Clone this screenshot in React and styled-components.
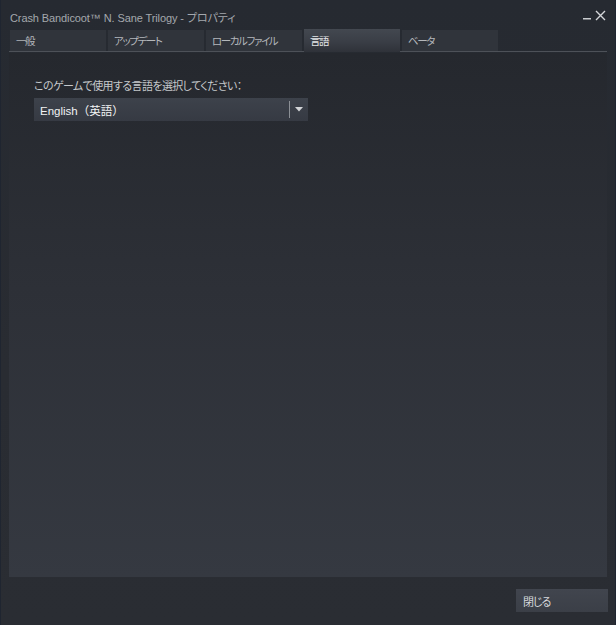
import React from "react";
import styled, { createGlobalStyle } from "styled-components";

const Global = createGlobalStyle`
  html, body { margin: 0; padding: 0; background: #1f232a; }
  body { font-family: "Liberation Sans", "Noto Sans CJK JP", sans-serif; }
  * { box-sizing: border-box; }
`;

const Window = styled.div`
  width: 616px;
  height: 625px;
  display: flex;
  flex-direction: column;
  background: linear-gradient(180deg, #262a31 0%, #292c32 60%, #2a2d33 100%);
  border-left: 1px solid #1f2530;
  border-right: 1px solid #1f2530;
  padding: 0 8px 0 8px;
`;

const TitleBar = styled.div`
  height: 29px;
  display: flex;
  align-items: center;
  justify-content: space-between;
  padding-left: 1px;
  padding-top: 4px;
`;

const Title = styled.div`
  font-size: 11px;
  color: #a4a8ad;
  font-feature-settings: "palt";
  letter-spacing: -0.1px;
`;

const Controls = styled.div`
  display: flex;
  align-items: flex-end;
  gap: 3px;
  margin-right: 1px;
  margin-top: -4px;
`;

const TabRow = styled.div`
  display: flex;
  gap: 2px;
  height: 23px;
  border-bottom: 1px solid #4d5158;
  padding-left: 1px;
`;

const Tab = styled.div`
  width: 96px;
  height: ${(p) => (p.$active ? "23px" : "21px")};
  margin-top: ${(p) => (p.$active ? "0" : "1px")};
  display: flex;
  align-items: center;
  padding-left: 6px;
  font-size: 10.5px;
  letter-spacing: -1.4px;
  font-feature-settings: "palt";
  color: ${(p) => (p.$active ? "#e4e6e8" : "#b4b7bb")};
  background: ${(p) =>
    p.$active
      ? "linear-gradient(180deg, #434850 0%, #3a3e46 55%, #2f3239 100%)"
      : "#30343b"};
`;

const Panel = styled.div`
  flex: 1;
  margin-top: 1px;
  background: linear-gradient(180deg, #25282e 0%, #2d3037 45%, #353941 100%);
  padding: 26px 24px 0 25px;
  display: flex;
  flex-direction: column;
  align-items: flex-start;
`;

const Label = styled.div`
  font-size: 11px;
  letter-spacing: -0.6px;
  font-feature-settings: "palt";
  color: #c5c8cb;
  height: 14px;
  line-height: 14px;
  margin-bottom: 5px;
`;

const Select = styled.div`
  width: 274px;
  height: 23px;
  display: flex;
  align-items: center;
  background: linear-gradient(180deg, #3d424b 0%, #363a43 100%);
`;

const SelectText = styled.div`
  flex: 1;
  padding-left: 6px;
  font-size: 11.5px;
  color: #f1f2f3;
`;

const Divider = styled.div`
  width: 1px;
  height: 17px;
  background: #8b8f95;
`;

const Arrow = styled.div`
  width: 18px;
  height: 23px;
  display: flex;
  align-items: center;
  justify-content: center;
`;

const Footer = styled.div`
  height: 48px;
  display: flex;
  justify-content: flex-end;
  padding-top: 12px;
  margin-right: -1px;
`;

const Button = styled.div`
  width: 92px;
  height: 23px;
  display: flex;
  align-items: center;
  padding-left: 7px;
  font-size: 11px;
  letter-spacing: -1px;
  color: #d6d8db;
  font-feature-settings: "palt";
  background: linear-gradient(180deg, #41454e 0%, #3b3f47 100%);
`;

const tabs = ["一般", "アップデート", "ローカルファイル", "言語", "ベータ"];

export default function App() {
  return (
    <>
      <Global />
      <Window>
        <TitleBar>
          <Title>Crash Bandicoot™ N. Sane Trilogy - プロパティ</Title>
          <Controls>
            <svg width="9" height="12" viewBox="0 0 9 12">
              <rect x="0" y="9" width="8" height="1.5" fill="#c9ccd0" />
            </svg>
            <svg width="11" height="11" viewBox="0 0 11 11">
              <path d="M1 1 L10 10 M10 1 L1 10" stroke="#d4d6d9" strokeWidth="1.4" />
            </svg>
          </Controls>
        </TitleBar>
        <TabRow>
          {tabs.map((t) => (
            <Tab key={t} $active={t === "言語"}>
              {t}
            </Tab>
          ))}
        </TabRow>
        <Panel>
          <Label>このゲームで使用する言語を選択してください：</Label>
          <Select>
            <SelectText>English（英語）</SelectText>
            <Divider />
            <Arrow>
              <svg width="8" height="5" viewBox="0 0 8 5">
                <path d="M0 0 L8 0 L4 4.5 Z" fill="#d3d5d8" />
              </svg>
            </Arrow>
          </Select>
        </Panel>
        <Footer>
          <Button>閉じる</Button>
        </Footer>
      </Window>
    </>
  );
}
